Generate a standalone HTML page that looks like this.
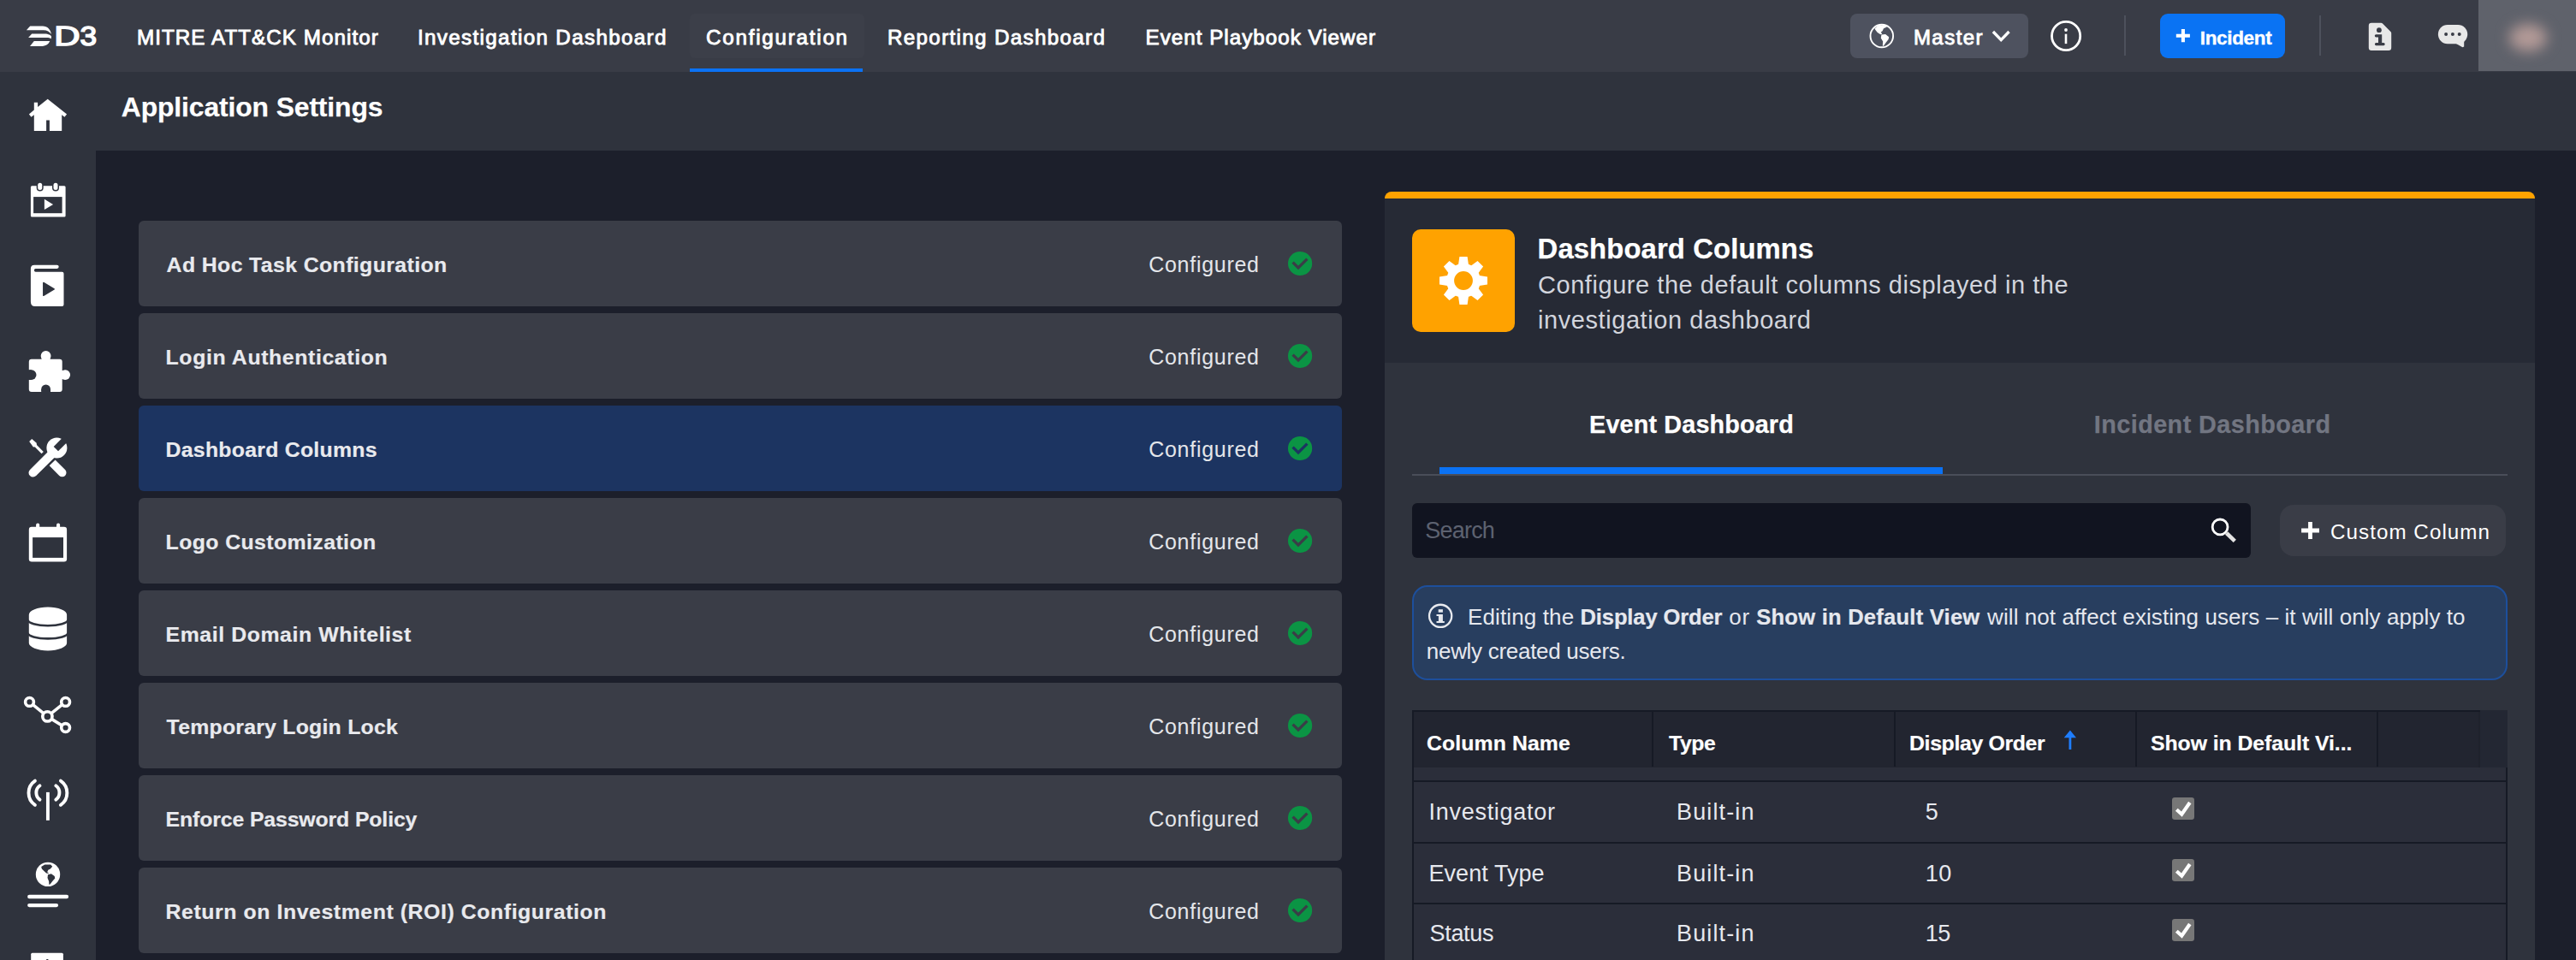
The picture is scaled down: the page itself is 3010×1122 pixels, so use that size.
<!DOCTYPE html>
<html lang="en"><head><meta charset="utf-8"><title>Application Settings</title>
<style>
html,body{margin:0;padding:0;}
body{width:3010px;height:1122px;overflow:hidden;position:relative;background:#1c1f2b;font-family:"Liberation Sans",sans-serif;}
.t{position:absolute;white-space:nowrap;line-height:1;}
.t b{font-weight:700;}
.abs{position:absolute;}
#topbar{left:0;top:0;width:3010px;height:84px;background:#393c46;}
#sidebar{left:0;top:84px;width:112px;height:1038px;background:#2f333d;}
#titlebar{left:112px;top:84px;width:2898px;height:92px;background:#2f333d;}
#navactive{left:806px;top:16px;width:204px;height:52px;border-radius:6px;background:#3c3f49;}
#navline{left:806px;top:80px;width:202px;height:4px;background:#0b72f4;}
.row{position:absolute;left:162px;width:1406px;height:100px;border-radius:6px;background:#3a3d47;}
.row.sel{background:#1c3461;}
#master{left:2162px;top:16px;width:208px;height:52px;border-radius:8px;background:#4e525f;}
.vdiv{position:absolute;top:18px;width:2px;height:47px;background:#4d515c;}
#incident{left:2524px;top:16px;width:146px;height:52px;border-radius:9px;background:#0a73f3;}
#avatar{left:2896px;top:0;width:114px;height:83px;background:#5f626b;overflow:hidden;}
#panel{left:1618px;top:224px;width:1344px;height:898px;background:#2f333d;border-radius:8px 8px 0 0;overflow:hidden;}
#ptop{left:0;top:0;width:1344px;height:8px;background:#ffa200;}
#phead{left:0;top:8px;width:1344px;height:192px;background:#262a35;}
#picon{left:32px;top:44px;width:120px;height:120px;border-radius:10px;background:#ffa200;}
#tabline{left:32px;top:330px;width:1280px;height:2px;background:#4a4e59;}
#tabactive{left:64px;top:322px;width:588px;height:8px;background:#0b72f4;}
#search{left:32px;top:364px;width:980px;height:64px;border-radius:6px;background:#111420;}
#custom{left:1046px;top:366px;width:264px;height:60px;border-radius:16px;background:#3a3d47;}
#info{left:32px;top:460px;width:1276px;height:107px;border-radius:18px;background:#283e5f;border:2px solid #1d4f9c;}

</style></head>
<body>
<div id="topbar" class="abs"></div>
<div id="sidebar" class="abs"></div>
<div id="titlebar" class="abs"></div>
<div id="navactive" class="abs"></div><div id="navline" class="abs"></div>
<div id="master" class="abs"></div>
<div class="vdiv" style="left:2482px"></div><div class="vdiv" style="left:2710px"></div>
<div id="incident" class="abs"></div>
<div id="avatar" class="abs"><div class="abs" style="left:36px;top:28px;width:44px;height:32px;border-radius:50%;background:#b39a97;filter:blur(8px);"></div></div>
<div class="row" style="top:258px"></div>
<div class="row" style="top:366px"></div>
<div class="row sel" style="top:474px"></div>
<div class="row" style="top:582px"></div>
<div class="row" style="top:690px"></div>
<div class="row" style="top:798px"></div>
<div class="row" style="top:906px"></div>
<div class="row" style="top:1014px"></div>
<div class="row" style="top:1122px"></div>
<div id="panel" class="abs">
<div id="ptop" class="abs"></div><div id="phead" class="abs"></div><div id="picon" class="abs"></div>
<div id="tabline" class="abs"></div><div id="tabactive" class="abs"></div>
<div id="search" class="abs"></div><div id="custom" class="abs"></div><div id="info" class="abs"></div>
<div class="abs" style="left:32px;top:606px;width:1280px;height:67px;background:#232733;"></div>
<div class="abs" style="left:32px;top:606px;width:1247px;height:67px;background:#222530;"></div>
<div class="abs" style="left:1278px;top:606px;width:2px;height:67px;background:#1f222c;"></div>
<div class="abs" style="left:32px;top:606px;width:1248px;height:2px;background:#161a25;"></div>
<div class="abs" style="left:312px;top:608px;width:2px;height:64px;background:#161a25;"></div>
<div class="abs" style="left:594.5px;top:608px;width:2px;height:64px;background:#161a25;"></div>
<div class="abs" style="left:876.5px;top:608px;width:2px;height:64px;background:#161a25;"></div>
<div class="abs" style="left:1158.5px;top:608px;width:2px;height:64px;background:#161a25;"></div>
<div class="abs" style="left:32px;top:673px;width:1279px;height:225px;background:#2b2e3a;"></div>
<div class="abs" style="left:32px;top:688px;width:1279px;height:2px;background:#161a25;"></div>
<div class="abs" style="left:32px;top:760px;width:1279px;height:2px;background:#161a25;"></div>
<div class="abs" style="left:32px;top:830.5px;width:1279px;height:2px;background:#161a25;"></div>
<div class="abs" style="left:32px;top:606px;width:2px;height:292px;background:#161a25;"></div>
<div class="abs" style="left:1309.8000000000002px;top:673px;width:2px;height:225px;background:#161a25;"></div>
</div>
<svg class="abs" style="left:0;top:0" width="3010" height="1122" viewBox="0 0 3010 1122">
<path fill="#ffffff" d="M30.9,35.2 L35.2,30.5 L49.8,30.5 C55.5,30.6 59.3,34.5 59.9,40.1 C57.8,36.8 55.0,35.2 50.9,35.2 Z"/>
<path fill="#ffffff" d="M33.1,43.9 L37.2,39.4 L52.1,39.4 C56.7,39.5 59.5,41.1 60.0,42.5 L59.8,45.3 C58.4,44.3 56.7,43.9 54.4,43.9 Z"/>
<path fill="#ffffff" d="M35.0,53.9 L39.8,48.1 L58.3,48.1 C56.7,51.7 53.8,53.7 49.8,53.9 Z"/>
<g font-family="Liberation Sans, sans-serif" font-size="30.8" fill="#ffffff" stroke="#ffffff" stroke-width="1.5"><text y="53.3"><tspan x="63.2" textLength="30.3" lengthAdjust="spacingAndGlyphs">D</tspan><tspan x="93.6" textLength="19.6" lengthAdjust="spacingAndGlyphs">3</tspan></text></g>
<path fill="#ffffff" d="M55.7,115.7 L78.1,133.5 L75.4,136.8 L72.2,134.2 L72.2,153 L57.9,153 L57.9,140.5 L54.1,140.5 L54.1,153 L39.8,153 L39.8,134.2 L36.5,136.8 L33.9,133.4 L39.8,128.6 L39.8,119.7 L44.1,119.7 L44.1,125.1 Z"/>
<rect x="35.9" y="217.2" width="40.7" height="36.4" rx="1.5" fill="#ffffff"/>
<rect x="39.1" y="230.1" width="33.5" height="19.1" fill="#2f333d"/>
<rect x="42.7" y="212.3" width="8" height="11.3" rx="4" fill="#2f333d"/>
<rect x="44.2" y="213.8" width="5" height="8.3" rx="2.5" fill="#ffffff"/>
<rect x="61" y="212.3" width="8" height="11.3" rx="4" fill="#2f333d"/>
<rect x="62.5" y="213.8" width="5" height="8.3" rx="2.5" fill="#ffffff"/>
<path fill="#ffffff" d="M51.9,232.7 L62.1,238.9 L51.9,245.1 Z"/>
<path fill="#ffffff" d="M35.9,314 Q35.9,309.7 40.2,309.7 L66.6,309.7 Q68.7,309.7 68.7,311.8 Q68.7,313.9 66.6,313.9 L41.6,313.9 Q39.9,313.9 39.9,315.8 Q39.9,317.7 41.6,317.7 L72.5,317.7 Q74.5,317.7 74.5,319.7 L74.5,356 Q74.5,358 72.5,358 L41,358 Q35.9,358 35.9,352.5 Z"/>
<path fill="#2f333d" stroke="#2f333d" stroke-width="1.5" stroke-linejoin="round" d="M50.8,330.5 L63.2,337.9 L50.8,345.3 Z"/>
<rect x="33.8" y="419.7" width="38.9" height="38.4" rx="3" fill="#ffffff"/>
<circle cx="53.6" cy="415.9" r="5.9" fill="#ffffff"/><rect x="48.6" y="415.9" width="10" height="6" fill="#ffffff"/>
<circle cx="76.2" cy="438.1" r="5.9" fill="#ffffff"/><rect x="70" y="433.1" width="6.2" height="10" fill="#ffffff"/>
<circle cx="36.6" cy="438.1" r="5.9" fill="#2f333d"/><rect x="30" y="432.2" width="6.6" height="11.8" fill="#2f333d"/>
<circle cx="53.6" cy="454.9" r="5.4" fill="#2f333d"/><rect x="48.2" y="454.9" width="10.8" height="5" fill="#2f333d"/>
<path stroke="#ffffff" stroke-width="9.6" stroke-linecap="round" fill="none" d="M61.1,540.8 L72.7,552.5"/>
<path stroke="#2f333d" stroke-width="15" stroke-linecap="round" fill="none" d="M38.6,552.5 L61.6,529.8"/>
<path stroke="#ffffff" stroke-width="3.2" fill="none" d="M39.5,518.8 L49.7,529.1"/>
<polygon fill="#ffffff" points="34.2,516.0 37.2,513.0 42.7,517.8 43.0,521.9 38.9,522.4"/>
<path stroke="#ffffff" stroke-width="10.2" stroke-linecap="round" fill="none" d="M38.6,552.5 L61.1,530.2"/>
<circle cx="66.4" cy="523.6" r="12" fill="#ffffff"/>
<polygon fill="#2f333d" points="62.7,522.0 75.6,509.1 80.9,514.4 68.0,527.3"/>
<rect x="33.8" y="615.7" width="44.3" height="40.7" rx="3.2" fill="#ffffff"/>
<rect x="38.1" y="628.1" width="35.9" height="23.8" fill="#2f333d"/>
<rect x="42.1" y="611.6" width="4.1" height="8" rx="2" fill="#ffffff"/>
<rect x="66" y="611.6" width="4.1" height="8" rx="2" fill="#ffffff"/>
<path fill="#ffffff" d="M33.8,718.5 A22.15,9 0 0 1 78.1,718.5 L78.1,751.4 A22.15,9 0 0 1 33.8,751.4 Z"/>
<path fill="none" stroke="#2f333d" stroke-width="2.6" d="M32.5,724.6 A23.4,6.6 0 0 0 79.4,724.6"/>
<path fill="none" stroke="#2f333d" stroke-width="2.6" d="M32.5,739.8 A23.4,6.6 0 0 0 79.4,739.8"/>
<path stroke="#ffffff" stroke-width="3.6" d="M55.4,837.4 L34.5,820.4"/>
<path stroke="#ffffff" stroke-width="3.6" d="M55.4,837.4 L76.6,820.4"/>
<path stroke="#ffffff" stroke-width="3.6" d="M55.4,837.4 L76.6,850.5"/>
<circle cx="34.5" cy="820.4" r="4.9" fill="#2f333d" stroke="#ffffff" stroke-width="3.6"/>
<circle cx="76.6" cy="820.4" r="4.9" fill="#2f333d" stroke="#ffffff" stroke-width="3.6"/>
<circle cx="55.4" cy="837.4" r="5.6" fill="#2f333d" stroke="#ffffff" stroke-width="3.6"/>
<circle cx="76.6" cy="850.5" r="4.9" fill="#2f333d" stroke="#ffffff" stroke-width="3.6"/>
<path stroke="#ffffff" stroke-width="3.9" d="M55.9,925.9 L55.9,958.8"/>
<path fill="none" stroke="#ffffff" stroke-width="3.9" stroke-linecap="round" d="M40.9,912.6 A17.1,17.1 0 0 0 40.9,940.8"/>
<path fill="none" stroke="#ffffff" stroke-width="3.9" stroke-linecap="round" d="M46.5,918.3 A10.1,10.1 0 0 0 46.5,934.6"/>
<path fill="none" stroke="#ffffff" stroke-width="3.9" stroke-linecap="round" d="M70.9,912.6 A17.1,17.1 0 0 1 70.9,940.8"/>
<path fill="none" stroke="#ffffff" stroke-width="3.9" stroke-linecap="round" d="M65.3,918.3 A10.1,10.1 0 0 1 65.3,934.6"/>
<circle cx="56" cy="1021.9" r="14.2" fill="#ffffff"/>
<polygon fill="#2f333d" points="48.2,1013.1 52.3,1010.6 59.2,1010.6 61.2,1012.7 58.8,1015.4 56.3,1016.8 55.2,1019.3 57.4,1021.1 54.1,1020.5 50.9,1017.5 48.9,1015.4"/>
<polygon fill="#2f333d" points="56.0,1022.2 59.9,1021.3 63.7,1024.1 64.3,1026.4 61.2,1029.9 58.8,1033.3 57.4,1034.0 57.1,1029.9 55.5,1026.0"/>
<rect x="32.1" y="1045.8" width="48" height="4.4" rx="2.2" fill="#ffffff"/>
<rect x="32.1" y="1056" width="36" height="4.2" rx="2.1" fill="#ffffff"/>
<rect x="36.2" y="1113.7" width="37.7" height="12" rx="1.5" fill="#ffffff"/>
<rect x="54.2" y="1121" width="2.2" height="2" fill="#2f333d"/>
<circle cx="2198.8" cy="42" r="13.3" fill="none" stroke="#ffffff" stroke-width="1.9"/>
<polygon fill="#ffffff" points="2190.5,33.3 2194.9,29.8 2203.1,29.2 2204.8,31.5 2201.0,33.3 2199.6,36.2 2197.8,37.4 2199.2,39.7 2197.3,40.3 2193.8,37.9 2191.4,35.0"/>
<polygon fill="#ffffff" points="2198.4,40.5 2203.1,40.0 2207.2,43.2 2206.6,46.1 2203.3,50.2 2200.8,54.0 2199.8,53.3 2200.2,48.4 2197.8,44.4"/>
<path fill="none" stroke="#ffffff" stroke-width="3.3" d="M2328.9,37 L2338.2,46.7 L2347.5,37"/>
<circle cx="2414.1" cy="42" r="16.6" fill="none" stroke="#ffffff" stroke-width="2.8"/>
<circle cx="2414" cy="35" r="1.9" fill="#ffffff"/><rect x="2412.7" y="39.7" width="2.6" height="11.4" fill="#ffffff"/>
<path stroke="#ffffff" stroke-width="4.1" d="M2542.8,41.7 L2558.9,41.7 M2550.9,34.1 L2550.9,49.2"/>
<path fill="#e8e8e8" d="M2767.8,30 Q2767.8,26.8 2771,26.8 L2782.2,26.8 Q2783.2,26.8 2784,27.6 L2793.4,37 Q2794.2,37.8 2794.2,38.8 L2794.2,55.7 Q2794.2,58.9 2791,58.9 L2771,58.9 Q2767.8,58.9 2767.8,55.7 Z"/>
<circle cx="2779.9" cy="35.2" r="2.9" fill="#393c46"/>
<path fill="#393c46" d="M2776.3,40.2 L2783.2,40.2 L2783.2,50 L2785.2,50 Q2786.7,50 2786.7,51.6 Q2786.7,53.2 2785.2,53.2 L2776.4,53.2 Q2774.9,53.2 2774.9,51.6 Q2774.9,50 2776.4,50 L2779,50 L2779,43.4 L2776.3,43.4 Q2774.8,43.4 2774.8,41.8 Q2774.8,40.2 2776.3,40.2 Z"/>
<rect x="2848.9" y="29" width="34.3" height="22.2" rx="11" fill="#e8e8e8"/>
<path fill="#e8e8e8" d="M2869,50.5 L2877.4,55.3 L2879.2,54.6 L2879.2,46 Z"/>
<circle cx="2858.1" cy="40.1" r="2" fill="#393c46"/>
<circle cx="2865.9" cy="40.1" r="2" fill="#393c46"/>
<circle cx="2873.7" cy="40.1" r="2" fill="#393c46"/>
<circle cx="1519.1" cy="308" r="14.1" fill="#0b9444"/>
<path fill="none" stroke="#3a3d47" stroke-width="3.3" d="M1510.6,306.6 L1517,313 L1527.4,302.6"/>
<circle cx="1519.1" cy="416" r="14.1" fill="#0b9444"/>
<path fill="none" stroke="#3a3d47" stroke-width="3.3" d="M1510.6,414.6 L1517,421 L1527.4,410.6"/>
<circle cx="1519.1" cy="524" r="14.1" fill="#0b9444"/>
<path fill="none" stroke="#1c3461" stroke-width="3.3" d="M1510.6,522.6 L1517,529 L1527.4,518.6"/>
<circle cx="1519.1" cy="632" r="14.1" fill="#0b9444"/>
<path fill="none" stroke="#3a3d47" stroke-width="3.3" d="M1510.6,630.6 L1517,637 L1527.4,626.6"/>
<circle cx="1519.1" cy="740" r="14.1" fill="#0b9444"/>
<path fill="none" stroke="#3a3d47" stroke-width="3.3" d="M1510.6,738.6 L1517,745 L1527.4,734.6"/>
<circle cx="1519.1" cy="848" r="14.1" fill="#0b9444"/>
<path fill="none" stroke="#3a3d47" stroke-width="3.3" d="M1510.6,846.6 L1517,853 L1527.4,842.6"/>
<circle cx="1519.1" cy="956" r="14.1" fill="#0b9444"/>
<path fill="none" stroke="#3a3d47" stroke-width="3.3" d="M1510.6,954.6 L1517,961 L1527.4,950.6"/>
<circle cx="1519.1" cy="1064" r="14.1" fill="#0b9444"/>
<path fill="none" stroke="#3a3d47" stroke-width="3.3" d="M1510.6,1062.6 L1517,1069 L1527.4,1058.6"/>
<path fill="#ffffff" d="M1727.0,321.8 L1738.0,323.4 L1738.0,332.6 L1727.0,334.2 Z M1726.4,335.6 L1733.1,344.5 L1726.5,351.1 L1717.6,344.4 Z M1716.2,345.0 L1714.6,356.0 L1705.4,356.0 L1703.8,345.0 Z M1702.4,344.4 L1693.5,351.1 L1686.9,344.5 L1693.6,335.6 Z M1693.0,334.2 L1682.0,332.6 L1682.0,323.4 L1693.0,321.8 Z M1693.6,320.4 L1686.9,311.5 L1693.5,304.9 L1702.4,311.6 Z M1703.8,311.0 L1705.4,300.0 L1714.6,300.0 L1716.2,311.0 Z M1717.6,311.6 L1726.5,304.9 L1733.1,311.5 L1726.4,320.4 Z "/>
<circle cx="1710" cy="328" r="15.4" fill="none" stroke="#ffffff" stroke-width="9"/>
<circle cx="2594.1" cy="615.9" r="8.9" fill="none" stroke="#ffffff" stroke-width="2.8"/>
<path stroke="#e4e4e4" stroke-width="4.6" d="M2601.6,623 L2611.3,632.3"/>
<path stroke="#ffffff" stroke-width="4.8" d="M2689.1,620 L2710,620 M2699.5,610 L2699.5,630"/>
<circle cx="1683.15" cy="719.85" r="13.1" fill="none" stroke="#e8eaef" stroke-width="2.3"/>
<rect x="1680.7" y="712.2" width="5.2" height="3.5" fill="#e8eaef"/>
<path fill="#e8eaef" d="M1678.5,717.9 L1685.9,717.9 L1685.9,726 L1687.8,726 L1687.8,728.1 L1678.5,728.1 L1678.5,726 L1680.9,726 L1680.9,720 L1678.5,720 Z"/>
<path fill="#1e7dfd" d="M2418.9,853.6 L2426,862.3 L2420.3,862.3 L2420.3,876 L2417.5,876 L2417.5,862.3 L2411.7,862.3 Z"/>
<rect x="2538" y="932" width="26" height="26" rx="3.2" fill="#777777"/>
<path fill="none" stroke="#ffffff" stroke-width="4.2" d="M2543.3,946.3 L2549.3,951.6 L2558.8,938"/>
<rect x="2538" y="1004" width="26" height="26" rx="3.2" fill="#777777"/>
<path fill="none" stroke="#ffffff" stroke-width="4.2" d="M2543.3,1018.3 L2549.3,1023.6 L2558.8,1010"/>
<rect x="2538" y="1074" width="26" height="26" rx="3.2" fill="#777777"/>
<path fill="none" stroke="#ffffff" stroke-width="4.2" d="M2543.3,1088.3 L2549.3,1093.6 L2558.8,1080"/>
</svg>
<span class="t" style="left:160.0px;top:32px;font-size:24.2px;font-weight:400;color:#fff;letter-spacing:1.059px;-webkit-text-stroke:0.9px #fff;">MITRE ATT&amp;CK Monitor</span>
<span class="t" style="left:488.0px;top:32px;font-size:24.2px;font-weight:400;color:#fff;letter-spacing:1.345px;-webkit-text-stroke:0.9px #fff;">Investigation Dashboard</span>
<span class="t" style="left:825.0px;top:32px;font-size:24.2px;font-weight:400;color:#fff;letter-spacing:1.765px;-webkit-text-stroke:0.9px #fff;">Configuration</span>
<span class="t" style="left:1037.0px;top:32px;font-size:24.2px;font-weight:400;color:#fff;letter-spacing:1.329px;-webkit-text-stroke:0.9px #fff;">Reporting Dashboard</span>
<span class="t" style="left:1338.6px;top:32px;font-size:24.2px;font-weight:400;color:#fff;letter-spacing:1.008px;-webkit-text-stroke:0.9px #fff;">Event Playbook Viewer</span>
<span class="t" style="left:2235.9px;top:32px;font-size:24px;font-weight:400;color:#fff;letter-spacing:1.467px;-webkit-text-stroke:0.9px #fff;">Master</span>
<span class="t" style="left:2570.8px;top:34px;font-size:22.5px;font-weight:700;color:#fff;letter-spacing:-0.339px;-webkit-text-stroke:0.4px #fff;">Incident</span>
<span class="t" style="left:141.8px;top:110px;font-size:31.8px;font-weight:700;color:#fff;letter-spacing:-0.09px;-webkit-text-stroke:0.25px #fff;">Application Settings</span>
<span class="t" style="left:194.6px;top:298px;font-size:24.8px;font-weight:700;color:#e9eaee;letter-spacing:0.407px;-webkit-text-stroke:0.2px #e9eaee;">Ad Hoc Task Configuration</span>
<span class="t" style="left:1342.2px;top:297px;font-size:25px;font-weight:400;color:#e4e6ea;letter-spacing:0.721px;">Configured</span>
<span class="t" style="left:193.6px;top:406px;font-size:24.8px;font-weight:700;color:#e9eaee;letter-spacing:0.633px;-webkit-text-stroke:0.2px #e9eaee;">Login Authentication</span>
<span class="t" style="left:1342.2px;top:405px;font-size:25px;font-weight:400;color:#e4e6ea;letter-spacing:0.721px;">Configured</span>
<span class="t" style="left:193.6px;top:514px;font-size:24.8px;font-weight:700;color:#e9eaee;letter-spacing:0.275px;-webkit-text-stroke:0.2px #e9eaee;">Dashboard Columns</span>
<span class="t" style="left:1342.2px;top:513px;font-size:25px;font-weight:400;color:#e4e6ea;letter-spacing:0.721px;">Configured</span>
<span class="t" style="left:193.6px;top:622px;font-size:24.8px;font-weight:700;color:#e9eaee;letter-spacing:0.426px;-webkit-text-stroke:0.2px #e9eaee;">Logo Customization</span>
<span class="t" style="left:1342.2px;top:621px;font-size:25px;font-weight:400;color:#e4e6ea;letter-spacing:0.721px;">Configured</span>
<span class="t" style="left:193.6px;top:730px;font-size:24.8px;font-weight:700;color:#e9eaee;letter-spacing:0.594px;-webkit-text-stroke:0.2px #e9eaee;">Email Domain Whitelist</span>
<span class="t" style="left:1342.2px;top:729px;font-size:25px;font-weight:400;color:#e4e6ea;letter-spacing:0.721px;">Configured</span>
<span class="t" style="left:194.6px;top:838px;font-size:24.8px;font-weight:700;color:#e9eaee;letter-spacing:0.249px;-webkit-text-stroke:0.2px #e9eaee;">Temporary Login Lock</span>
<span class="t" style="left:1342.2px;top:837px;font-size:25px;font-weight:400;color:#e4e6ea;letter-spacing:0.721px;">Configured</span>
<span class="t" style="left:193.6px;top:946px;font-size:24.8px;font-weight:700;color:#e9eaee;letter-spacing:-0.114px;-webkit-text-stroke:0.2px #e9eaee;">Enforce Password Policy</span>
<span class="t" style="left:1342.2px;top:945px;font-size:25px;font-weight:400;color:#e4e6ea;letter-spacing:0.721px;">Configured</span>
<span class="t" style="left:193.6px;top:1054px;font-size:24.8px;font-weight:700;color:#e9eaee;letter-spacing:0.591px;-webkit-text-stroke:0.2px #e9eaee;">Return on Investment (ROI) Configuration</span>
<span class="t" style="left:1342.2px;top:1053px;font-size:25px;font-weight:400;color:#e4e6ea;letter-spacing:0.721px;">Configured</span>
<span class="t" style="left:1796.6px;top:275px;font-size:32.8px;font-weight:700;color:#fff;letter-spacing:0.12px;-webkit-text-stroke:0.25px #fff;">Dashboard Columns</span>
<span class="t" style="left:1797.0px;top:319px;font-size:29px;font-weight:400;color:#d2d5dd;letter-spacing:0.55px;">Configure the default columns displayed in the</span>
<span class="t" style="left:1797.0px;top:360px;font-size:29px;font-weight:400;color:#d2d5dd;letter-spacing:0.573px;">investigation dashboard</span>
<span class="t" style="left:1857.1px;top:482px;font-size:28.8px;font-weight:700;color:#fff;letter-spacing:0.132px;-webkit-text-stroke:0.25px #fff;">Event Dashboard</span>
<span class="t" style="left:2446.8px;top:482px;font-size:28.8px;font-weight:700;color:#727682;letter-spacing:0.434px;-webkit-text-stroke:0.25px #727682;">Incident Dashboard</span>
<span class="t" style="left:1665.2px;top:607px;font-size:27px;font-weight:400;color:#5d6270;letter-spacing:-0.769px;">Search</span>
<span class="t" style="left:2723.0px;top:610px;font-size:24.2px;font-weight:400;color:#fff;letter-spacing:1.045px;">Custom Column</span>
<span class="t" style="left:1715.0px;top:708px;font-size:26px;font-weight:400;color:#e6e8ee;letter-spacing:0.128px;">Editing the</span>
<span class="t" style="left:1846.5px;top:709px;font-size:25.6px;font-weight:700;color:#e6e8ee;letter-spacing:-0.15px;-webkit-text-stroke:0.2px #e6e8ee;">Display Order</span>
<span class="t" style="left:2020.2px;top:708px;font-size:26px;font-weight:400;color:#e6e8ee;letter-spacing:0.733px;">or</span>
<span class="t" style="left:2052.2px;top:709px;font-size:25.6px;font-weight:700;color:#e6e8ee;letter-spacing:0.219px;-webkit-text-stroke:0.2px #e6e8ee;">Show in Default View</span>
<span class="t" style="left:2322.1px;top:708px;font-size:26px;font-weight:400;color:#e6e8ee;letter-spacing:0.076px;">will not affect existing users – it will only apply to</span>
<span class="t" style="left:1666.8px;top:748px;font-size:26px;font-weight:400;color:#e6e8ee;letter-spacing:-0.291px;">newly created users.</span>
<span class="t" style="left:1667.0px;top:857px;font-size:24.8px;font-weight:700;color:#fff;letter-spacing:0.107px;-webkit-text-stroke:0.2px #fff;">Column Name</span>
<span class="t" style="left:1950.0px;top:857px;font-size:24.8px;font-weight:700;color:#fff;letter-spacing:-0.419px;-webkit-text-stroke:0.2px #fff;">Type</span>
<span class="t" style="left:2231.0px;top:857px;font-size:24.8px;font-weight:700;color:#fff;letter-spacing:-0.331px;-webkit-text-stroke:0.2px #fff;">Display Order</span>
<span class="t" style="left:2513.0px;top:857px;font-size:24.8px;font-weight:700;color:#fff;letter-spacing:-0.056px;-webkit-text-stroke:0.2px #fff;">Show in Default Vi...</span>
<span class="t" style="left:1669.5px;top:936px;font-size:27px;font-weight:400;color:#e6e8ee;letter-spacing:0.719px;">Investigator</span>
<span class="t" style="left:1959.0px;top:936px;font-size:27px;font-weight:400;color:#e6e8ee;letter-spacing:1.141px;">Built-in</span>
<span class="t" style="left:2249.8px;top:936px;font-size:27px;font-weight:400;color:#e6e8ee;letter-spacing:0px;">5</span>
<span class="t" style="left:1669.5px;top:1008px;font-size:27px;font-weight:400;color:#e6e8ee;letter-spacing:0.058px;">Event Type</span>
<span class="t" style="left:1959.0px;top:1008px;font-size:27px;font-weight:400;color:#e6e8ee;letter-spacing:1.141px;">Built-in</span>
<span class="t" style="left:2249.7px;top:1008px;font-size:27px;font-weight:400;color:#e6e8ee;letter-spacing:0.669px;">10</span>
<span class="t" style="left:1670.5px;top:1078px;font-size:27px;font-weight:400;color:#e6e8ee;letter-spacing:-0.309px;">Status</span>
<span class="t" style="left:1959.0px;top:1078px;font-size:27px;font-weight:400;color:#e6e8ee;letter-spacing:1.141px;">Built-in</span>
<span class="t" style="left:2249.7px;top:1078px;font-size:27px;font-weight:400;color:#e6e8ee;letter-spacing:-0.431px;">15</span>
</body></html>
